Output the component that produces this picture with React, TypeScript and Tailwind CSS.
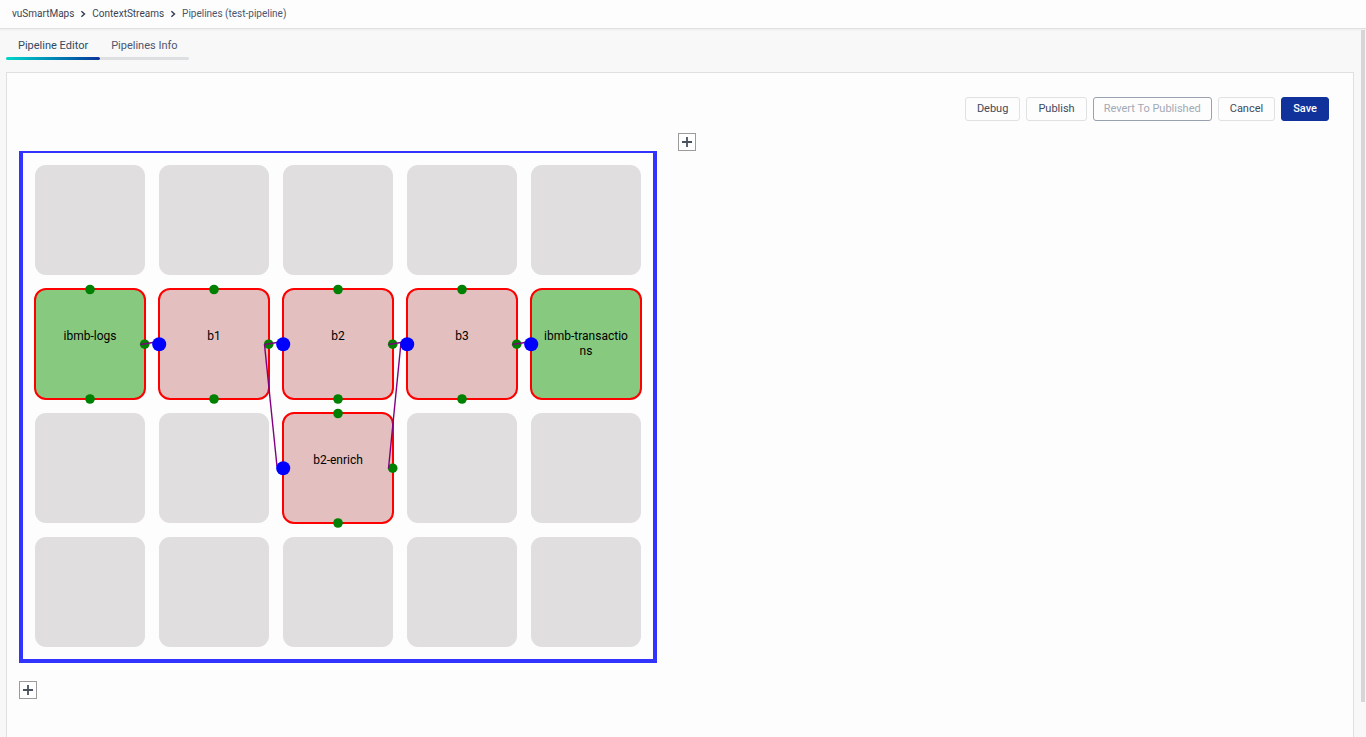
import { clsx } from 'clsx';

type BlockKind = 'endpoint' | 'block';

type Block = {
  name: string;
  row: number;
  col: number;
  kind: BlockKind;
  ports: ('in' | 'out' | 'top' | 'bottom')[];
};

const ROWS = 4;
const COLS = 5;
const CELL = 110;
const PITCH = 124;

const BREADCRUMBS = ['vuSmartMaps', 'ContextStreams'];

const BLOCKS: Block[] = [
  { name: 'ibmb-logs', row: 1, col: 0, kind: 'endpoint', ports: ['top', 'bottom', 'out'] },
  { name: 'b1', row: 1, col: 1, kind: 'block', ports: ['top', 'bottom', 'in', 'out'] },
  { name: 'b2', row: 1, col: 2, kind: 'block', ports: ['top', 'bottom', 'in', 'out'] },
  { name: 'b3', row: 1, col: 3, kind: 'block', ports: ['top', 'bottom', 'in', 'out'] },
  { name: 'ibmb-transactions', row: 1, col: 4, kind: 'endpoint', ports: ['in'] },
  { name: 'b2-enrich', row: 2, col: 2, kind: 'block', ports: ['top', 'bottom', 'in', 'out'] }
];

const LINKS = [
  ['ibmb-logs', 'b1'],
  ['b1', 'b2'],
  ['b1', 'b2-enrich'],
  ['b2', 'b3'],
  ['b2-enrich', 'b3'],
  ['b3', 'ibmb-transactions']
];

const ACTIONS = [
  { label: 'Debug', className: 'px-[11px] border-[#e0e1e3] text-[#3f4a5c]' },
  { label: 'Publish', className: 'px-[11px] border-[#e0e1e3] text-[#3f4a5c]' },
  { label: 'Revert To Published', className: 'px-[10px] border-[#98a1b0] text-[#a3a9b5]', disabled: true },
  { label: 'Cancel', className: 'px-[11px] border-[#e0e1e3] text-[#3f4a5c]' },
  { label: 'Save', className: 'px-[11px] border-[#11329a] bg-[#11329a] font-medium text-white' }
];

function Chevron() {
  return (
    <svg viewBox="0 0 6 8" className="h-2 w-1.5" fill="none" stroke="#333b48" strokeWidth="1.4" aria-hidden="true">
      <path d="M1.4 1.2 4.5 4 1.4 6.8" />
    </svg>
  );
}

function AddButton({ label, className }: { label: string; className?: string }) {
  return (
    <button
      type="button"
      aria-label={label}
      className={clsx('flex size-[18px] items-center justify-center border border-[#9b9b9b] bg-white', className)}
    >
      <svg viewBox="0 0 10 10" className="size-2.5" stroke="#4a5260" strokeWidth="1.8" aria-hidden="true">
        <path d="M5 0v10M0 5h10" />
      </svg>
    </button>
  );
}

function Cell({ block }: { block?: Block }) {
  if (!block) {
    return <div className="size-[110px] rounded-[11px] bg-[#e0dedf]" />;
  }

  return (
    <div
      className={clsx(
        'size-[110px] rounded-[11px] px-3 pt-10 text-center text-[12px] leading-[15px] break-all text-black outline-2 -outline-offset-1 outline-[#ff0000]',
        block.kind === 'endpoint' ? 'bg-[#87c97f]' : 'bg-[#e3bfbf]'
      )}
    >
      {block.name}
    </div>
  );
}

// Ports and links are drawn above the cells, in the same coordinates as the grid
function Wiring() {
  const find = (name: string) => BLOCKS.find((b) => b.name === name)!;

  return (
    <svg
      viewBox="0 0 606 482"
      className="pointer-events-none absolute top-3 left-3 h-[482px] w-[606px] overflow-visible"
      aria-hidden="true"
    >
      {BLOCKS.map((b) => {
        const x = b.col * PITCH;
        const y = b.row * PITCH;
        return (
          <g key={b.name} fill="#008000">
            {b.ports.includes('top') && <circle cx={x + CELL / 2} cy={y + 0.5} r="4.8" />}
            {b.ports.includes('bottom') && <circle cx={x + CELL / 2} cy={y + CELL} r="4.8" />}
            {b.ports.includes('out') && <circle cx={x + CELL - 0.3} cy={y + CELL / 2 + 0.2} r="4.8" />}
          </g>
        );
      })}
      {LINKS.map(([from, to]) => {
        const a = find(from);
        const b = find(to);
        return (
          <line
            key={`${from}-${to}`}
            x1={a.col * PITCH + CELL - 4.5}
            y1={a.row * PITCH + CELL / 2 + 0.5}
            x2={b.col * PITCH - 6}
            y2={b.row * PITCH + CELL / 2 - 1.5}
            stroke="#800080"
            strokeWidth="1.4"
          />
        );
      })}
      {BLOCKS.filter((b) => b.ports.includes('in')).map((b) => (
        <circle key={b.name} cx={b.col * PITCH + 0.2} cy={b.row * PITCH + CELL / 2 + 0.2} r="7" fill="#0000ff" />
      ))}
    </svg>
  );
}

function Board() {
  const cells = Array.from({ length: ROWS * COLS }, (_, i) => ({
    row: Math.floor(i / COLS),
    col: i % COLS
  }));

  return (
    <div className="relative border-4 border-t-2 border-[#3333ff] p-3">
      <div className="grid grid-cols-[repeat(5,110px)] gap-[14px]">
        {cells.map(({ row, col }) => (
          <Cell key={`${row}-${col}`} block={BLOCKS.find((b) => b.row === row && b.col === col)} />
        ))}
      </div>
      <Wiring />
    </div>
  );
}

export default function App() {
  return (
    <div className="flex h-screen flex-col overflow-hidden bg-[#f8f8f8] font-[Roboto,sans-serif] text-[11px] leading-4 text-[#4b5670]">
      <header className="border-b border-[#e0e0e1] bg-[#fdfdfd] shadow-xs">
        <nav aria-label="Breadcrumb" className="flex h-7 items-center gap-1.5 px-3 text-[10px]">
          {BREADCRUMBS.map((crumb) => (
            <div key={crumb} className="flex items-center gap-1.5">
              <a href="#" className="text-[#3a4354]">{crumb}</a>
              <Chevron />
            </div>
          ))}
          <span>Pipelines (test-pipeline)</span>
        </nav>
      </header>

      <div className="flex min-h-0 flex-1">
        <main className="flex min-w-0 flex-1 flex-col pr-[7px] pl-1.5">
          <div role="tablist" className="flex pt-[9px]">
            <button type="button" role="tab" aria-selected="true" className="text-[#2f4a63]">
              <span className="block px-3 pb-[3px]">Pipeline Editor</span>
              <span className="block h-[3px] rounded-full bg-linear-to-r from-[#00d8c8] to-[#11329a]" />
            </button>
            <button type="button" role="tab" aria-selected="false">
              <span className="block px-[11px] pb-[3px]">Pipelines Info</span>
              <span className="block h-[3px] rounded-r-full bg-[#dedfe0]" />
            </button>
          </div>

          <section className="mt-3 flex-1 border border-b-0 border-[#e0e0e1] bg-[#fdfdfd] px-3 pt-6">
            <div className="flex justify-end gap-1.5 pr-3">
              {ACTIONS.map((action) => (
                <button
                  key={action.label}
                  type="button"
                  disabled={action.disabled}
                  className={clsx('h-6 rounded-[3px] border', action.className)}
                >
                  {action.label}
                </button>
              ))}
            </div>

            <div className="mt-3 grid grid-cols-[auto_1fr] gap-x-[21px]">
              <AddButton label="Add column" className="col-start-2" />
              <Board />
              <AddButton label="Add row" className="col-start-1 mt-[18px]" />
            </div>
          </section>
        </main>

        <div className="w-[5px] pt-px pr-px">
          <div className="h-[95%] bg-[#d6d6d9]" />
        </div>
      </div>
    </div>
  );
}
